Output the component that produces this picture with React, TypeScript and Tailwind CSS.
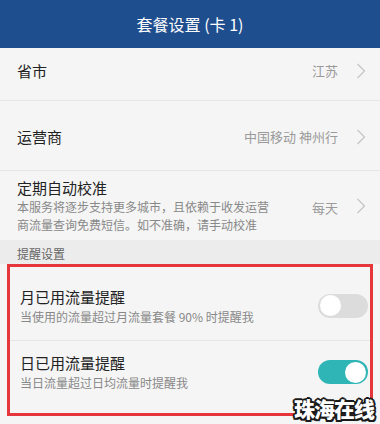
import React from "react";

const font = { fontFamily: '"Noto Sans CJK SC", "Noto Sans", sans-serif' };

function Chevron() {
  return (
    <svg width="10" height="16" viewBox="0 0 10 16" className="shrink-0">
      <path d="M1.5 1 L8.5 8 L1.5 15" fill="none" stroke="#c4c4c4" strokeWidth="1.2" />
    </svg>
  );
}

function Toggle({ on }: { on: boolean }) {
  return (
    <div
      className={`w-[50px] h-[24px] rounded-full flex items-center px-[2px] ${
        on ? "bg-[#2fb5b5] justify-end" : "bg-[#dcdcdc] justify-start"
      }`}
    >
      <div className="w-[21px] h-[21px] rounded-full bg-white" />
    </div>
  );
}

export default function App() {
  return (
    <div className="relative w-[380px] h-[424px] overflow-hidden bg-[#f5f5f5]" style={font}>
      <div className="h-[48px] bg-[#1f4e8e] flex items-center justify-center text-white text-[16px]">
        套餐设置 (卡 1)
      </div>

      <div className="h-[53px] flex items-center pl-[17px] pr-[14px] pb-[6px] border-b border-[#e6e6e6]">
        <div className="flex-1 text-[15px] text-[#222]">省市</div>
        <div className="text-[13px] text-[#9a9a9a] mr-[18px]">江苏</div>
        <Chevron />
      </div>

      <div className="h-[70px] flex items-center pl-[17px] pr-[14px] pt-[3px] border-b border-[#e6e6e6]">
        <div className="flex-1 text-[15px] text-[#222]">运营商</div>
        <div className="text-[13px] text-[#9a9a9a] mr-[18px]">中国移动 神州行</div>
        <Chevron />
      </div>

      <div className="h-[69px] flex items-center pl-[17px] pr-[14px]">
        <div className="flex-1 flex flex-col">
          <div className="text-[15px] leading-[20px] text-[#222]">定期自动校准</div>
          <div className="text-[12px] leading-[18px] text-[#888]">
            本服务将逐步支持更多城市，且依赖于收发运营
            <br />
            商流量查询免费短信。如不准确，请手动校准
          </div>
        </div>
        <div className="text-[13px] text-[#9a9a9a] mr-[18px] mt-[4px]">每天</div>
        <Chevron />
      </div>

      <div className="h-[24px] bg-[#ececec] pl-[17px] flex items-end pb-[1px] text-[12px] text-[#666]">
        提醒设置
      </div>

      <div className="mx-[7px] border-[3px] border-[#e5363c] h-[152px] flex flex-col">
        <div className="h-[74px] flex items-center pl-[10px] pr-[2px] border-b border-[#e6e6e6] pt-[4px]">
          <div className="flex-1 flex flex-col">
            <div className="text-[15px] leading-[22px] text-[#222]">月已用流量提醒</div>
            <div className="text-[12px] leading-[18px] text-[#888]">当使用的流量超过月流量套餐 90% 时提醒我</div>
          </div>
          <Toggle on={false} />
        </div>
        <div className="flex-1 flex items-center pl-[10px] pr-[2px] pb-[10px]">
          <div className="flex-1 flex flex-col">
            <div className="text-[15px] leading-[22px] text-[#222]">日已用流量提醒</div>
            <div className="text-[12px] leading-[18px] text-[#888]">当日流量超过日均流量时提醒我</div>
          </div>
          <Toggle on={true} />
        </div>
      </div>

      <div
        className="absolute right-[6px] bottom-[5px] text-[21px] font-black text-white leading-none tracking-[-1px]"
        style={{
          WebkitTextStroke: "1.5px #1a1a1a",
          paintOrder: "stroke fill",
          textShadow:
            "2px 0 0 #1a1a1a, -2px 0 0 #1a1a1a, 0 2px 0 #1a1a1a, 0 -2px 0 #1a1a1a, 1.5px 1.5px 0 #1a1a1a, -1.5px -1.5px 0 #1a1a1a, 1.5px -1.5px 0 #1a1a1a, -1.5px 1.5px 0 #1a1a1a",
        }}
      >
        珠海在线
      </div>
    </div>
  );
}
